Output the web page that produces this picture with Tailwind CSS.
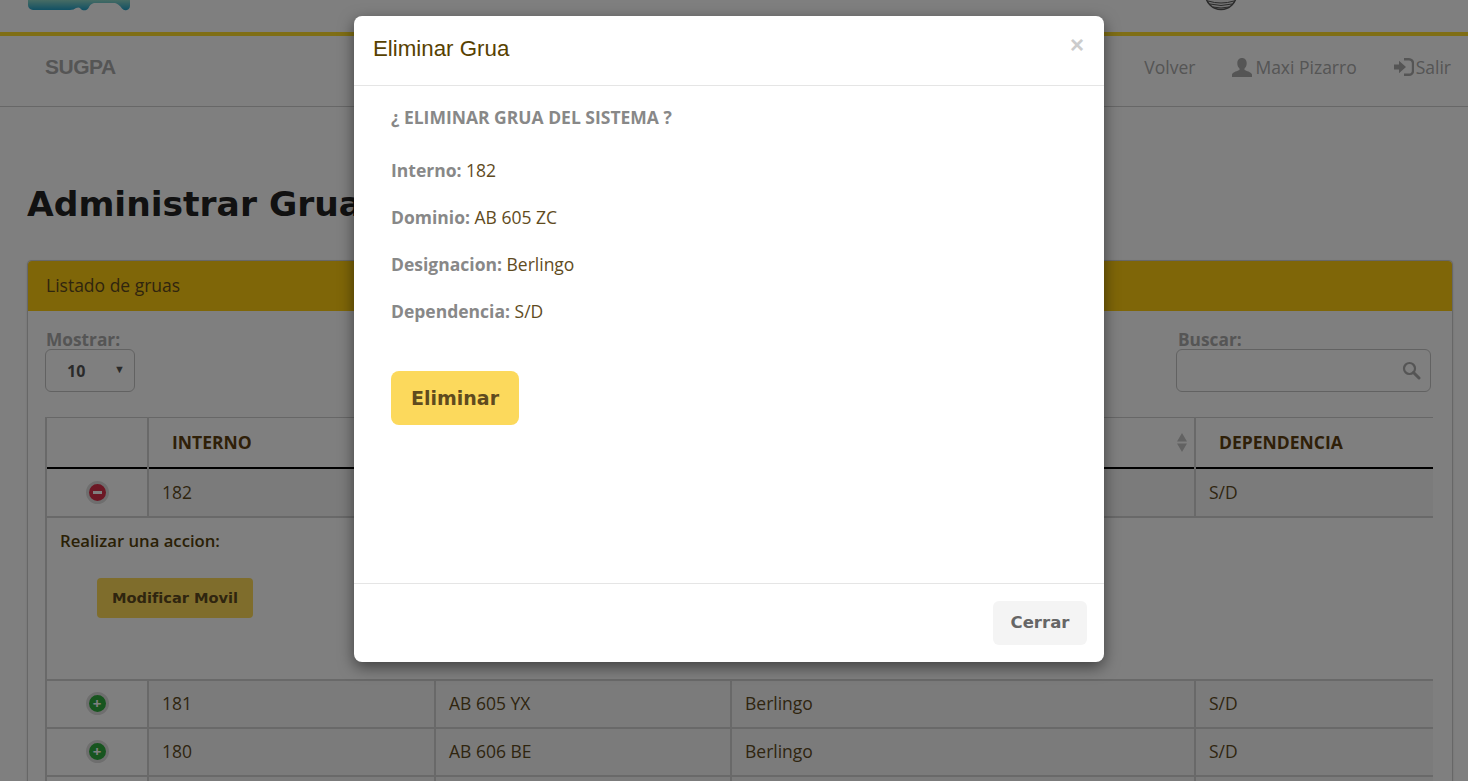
<!DOCTYPE html>
<html lang="es">
  <head>
    <meta charset="UTF-8" />
    <meta name="viewport" content="width=device-width, initial-scale=1.0" />
    <title>Administrar Gruas — SUGPA</title>
    <script src="https://cdn.jsdelivr.net/npm/@tailwindcss/browser@4"></script>
  </head>
  <body class="relative h-[781px] overflow-hidden bg-white font-['Open_Sans',sans-serif] text-[#5f4b1e]">
    <!-- cabecera recortada por el scroll -->
    <div class="flex h-8 items-start justify-between overflow-hidden pl-7 pr-[230px]">
      <svg width="102" height="11" viewBox="0 0 102 11">
        <defs><linearGradient id="logo" x1="0" y1="0" x2="0" y2="1"><stop offset="0" stop-color="#8fd8c8" /><stop offset="1" stop-color="#1f9fc8" /></linearGradient></defs>
        <path d="M0 0H102V6a4.500 4.500 0 0 1-8 2.500Q91 4 87 3H66q-4 1-5.500 5a5 5 0 0 1-8.500 0q-1.500-1-4 0-2 2-6 2H5a5 5 0 0 1-5-5z" fill="url(#logo)" />
      </svg>
      <svg width="34" height="11" viewBox="0 0 34 11">
        <circle cx="17" cy="-6" r="15.500" fill="#e8e8e8" stroke="#555" stroke-width="1.500" />
        <path d="M4 1q13 4 26 0M6 4q11 3 22 0M9 7q8 2 16 0" fill="none" stroke="#555" />
      </svg>
    </div>
    <nav class="flex h-[75px] items-center justify-between border-t-4 border-b border-t-[#ffdd2a] border-b-[#cfcfcf] bg-white pb-[8px] pl-[45px] pr-[17px] text-[#aaaaaa]">
      <span class="font-['Liberation_Sans',sans-serif] text-[21px] font-bold tracking-[-0.5px]">SUGPA</span>
      <div class="flex items-center gap-[37px] text-[17.500px]">
        <span>Volver</span>
        <span class="flex items-center gap-[3px]">
          <svg width="20" height="19" viewBox="0 0 20 19" fill="#aaaaaa"><path d="M10 0c3 0 4.700 2.200 4.700 5.200 0 2.300-1 4.300-2.200 5.300v1.500c1.800 1 6.500 1.800 7.500 4.500v2.500H0V16.500C1 13.800 5.700 13 7.500 12v-1.500C6.300 9.500 5.300 7.500 5.300 5.200 5.300 2.200 7 0 10 0z" /></svg>
          Maxi Pizarro
        </span>
        <span class="flex items-center gap-[2px]">
          <svg width="20" height="18" viewBox="0 0 20 18" fill="#aaaaaa"><path d="M0 6.500h5V2.800L12 9l-7 6.200v-3.700H0z" /><path d="M10 1.200h5a4 4 0 0 1 4 4v7.600a4 4 0 0 1-4 4h-5" fill="none" stroke="#aaaaaa" stroke-width="2.400" /></svg>
          Salir
        </span>
      </div>
    </nav>

    <main class="px-[27px] pt-[75px]">
      <h1 class="font-['DejaVu_Sans',sans-serif] text-[34.500px] leading-[44px] font-bold whitespace-nowrap text-[#222222]">Administrar Gruas</h1>
      <section class="mt-[34px] w-[1426px] rounded border border-[#cfcfcf] shadow-sm">
        <div class="flex h-[50px] items-center rounded-t bg-[#ffcc11] px-[18px] pb-px text-[17.500px] text-[#5f4b1e]">Listado de gruas</div>
        <div class="px-[17px] pt-[17px]">
          <div class="flex items-start justify-between pr-[4px]">
            <div>
              <div class="-mb-px pt-[2px] pl-px text-[17.300px] leading-[20px] font-bold text-[#aaaaaa]">Mostrar:</div>
              <div class="flex h-[43px] w-[90px] items-center justify-between rounded-md border border-[#c4c4c4] pl-[21px] pr-[9px] text-base font-bold text-[#555555]">
                10 <span class="mb-[3px] text-[11px] text-[#555555]">▼</span>
              </div>
            </div>
            <div>
              <div class="-mb-px pt-[2px] pl-0.5 text-[17.300px] leading-[20px] font-bold text-[#aaaaaa]">Buscar:</div>
              <div class="flex h-[43px] w-[255px] items-center justify-end rounded-md border border-[#c4c4c4] pr-[9px]">
                <svg width="19" height="19" viewBox="0 0 19 19" fill="none" stroke="#aaaaaa"><circle cx="7.500" cy="7.500" r="5.500" stroke-width="2.200" /><path d="M11.500 11.500l5.500 5.500" stroke-width="3" stroke-linecap="round" /></svg>
              </div>
            </div>
          </div>
          <table class="mt-[25px] w-[1387px] table-fixed border-collapse text-[17.500px]">
            <colgroup>
              <col class="w-[102px]" /><col class="w-[287px]" /><col class="w-[296px]" /><col class="w-[464px]" /><col class="w-[238px]" />
            </colgroup>
            <thead>
              <tr class="h-[50px] border-t border-b-2 border-t-[#cfcfcf] border-b-black font-bold text-[#5f4010]">
                <th class="border-x-2 border-[#d2d2d2]"></th>
                <th class="border-r-2 border-[#d2d2d2] pl-[23px] text-left">INTERNO</th>
                <th class="border-r-2 border-[#d2d2d2] pl-[23px] text-left">DOMINIO</th>
                <th class="relative border-r-2 border-[#d2d2d2] pl-[23px] text-left">DESIGNACION
                  <svg class="absolute right-[7px] top-[15px]" width="10" height="19" viewBox="0 0 10 19" fill="#c4c4c4"><path d="M5 0l5 8.500H0zM5 19l5-8.500H0z" /></svg>
                </th>
                <th class="pl-[23px] text-left">DEPENDENCIA</th>
              </tr>
            </thead>
            <tbody>
              <tr class="h-[49px] border-b-2 border-[#d2d2d2] bg-[#f7f7f7]">
                <td class="border-x-2 border-[#d2d2d2] bg-white">
                  <span class="mx-auto flex size-[23px] items-center justify-center rounded-full border-[3px] border-[#dddddd] bg-[#d9304a]"><span class="h-[3px] w-[9px] bg-white"></span></span>
                </td>
                <td class="border-r-2 border-[#d2d2d2] pl-[13px]">182</td>
                <td class="border-r-2 border-[#d2d2d2] pl-[13px]">AB 605 ZC</td>
                <td class="border-r-2 border-[#d2d2d2] pl-[13px]">Berlingo</td>
                <td class="pl-[13px]">S/D</td>
              </tr>
              <tr class="h-[163px] border-b-2 border-[#d2d2d2]">
                <td colspan="5" class="border-l-2 border-[#d2d2d2] pb-[61px] pl-[13px] align-top">
                  <p class="pt-[10px] text-[16.700px] font-semibold text-[#55410a]">Realizar una accion:</p>
                  <span class="mt-[25px] ml-[37px] flex h-10 w-[156px] items-center justify-center rounded bg-[#ffdb58] font-['DejaVu_Sans',sans-serif] text-[14.600px] font-bold text-[#5f4b1e]">Modificar Movil</span>
                </td>
              </tr>
              <tr class="h-[48px] border-b-2 border-[#d2d2d2] bg-[#f7f7f7]">
                <td class="border-x-2 border-[#d2d2d2] bg-white">
                  <span class="mx-auto flex size-[23px] items-center justify-center rounded-full border-[3px] border-[#dddddd] bg-[#2faa3e] text-[15px] leading-none font-bold text-white">+</span>
                </td>
                <td class="border-r-2 border-[#d2d2d2] pl-[13px]">181</td>
                <td class="border-r-2 border-[#d2d2d2] pl-[13px]">AB 605 YX</td>
                <td class="border-r-2 border-[#d2d2d2] pl-[13px]">Berlingo</td>
                <td class="pl-[13px]">S/D</td>
              </tr>
              <tr class="h-[48px] border-b-2 border-[#d2d2d2] bg-[#f7f7f7]">
                <td class="border-x-2 border-[#d2d2d2] bg-white">
                  <span class="mx-auto flex size-[23px] items-center justify-center rounded-full border-[3px] border-[#dddddd] bg-[#2faa3e] text-[15px] leading-none font-bold text-white">+</span>
                </td>
                <td class="border-r-2 border-[#d2d2d2] pl-[13px]">180</td>
                <td class="border-r-2 border-[#d2d2d2] pl-[13px]">AB 606 BE</td>
                <td class="border-r-2 border-[#d2d2d2] pl-[13px]">Berlingo</td>
                <td class="pl-[13px]">S/D</td>
              </tr>
              <tr class="h-[48px] bg-[#f7f7f7]">
                <td class="border-x-2 border-[#d2d2d2] bg-white"></td>
                <td class="border-r-2 border-[#d2d2d2]"></td>
                <td class="border-r-2 border-[#d2d2d2]"></td>
                <td class="border-r-2 border-[#d2d2d2]"></td>
                <td></td>
              </tr>
            </tbody>
          </table>
        </div>
      </section>
    </main>

    <!-- modal -->
    <div class="absolute inset-0 flex justify-center bg-black/50 pt-4 pr-[10px]">
      <div class="flex h-[646px] w-[750px] flex-col rounded-lg bg-white shadow-[0_5px_15px_rgba(0,0,0,0.5)]">
        <div class="relative flex h-[70px] items-center border-b border-[#e5e5e5] pb-1 px-[19px]">
          <h4 class="font-['Liberation_Sans',sans-serif] text-[22.300px] text-[#574100]">Eliminar Grua</h4>
          <span class="absolute right-[20px] top-[16px] font-['Liberation_Sans',sans-serif] text-[24px] leading-[26px] font-bold text-[#cccccc]">×</span>
        </div>
        <div class="flex-1 px-[37px] pt-[19px] text-[17.500px] text-[#5f4b1e]">
          <p class="leading-[24px] font-bold text-[#888888]">¿ ELIMINAR GRUA DEL SISTEMA ?</p>
          <p class="mt-[29px] leading-[24px]"><b class="text-[#888888]">Interno:</b> 182</p>
          <p class="mt-[23px] leading-[24px]"><b class="text-[#888888]">Dominio:</b> AB 605 ZC</p>
          <p class="mt-[23px] leading-[24px]"><b class="text-[#888888]">Designacion:</b> Berlingo</p>
          <p class="mt-[23px] leading-[24px]"><b class="text-[#888888]">Dependencia:</b> S/D</p>
          <button class="mt-[48px] flex h-[54px] w-[128px] items-center justify-center rounded-lg bg-[#fcd95c] font-['DejaVu_Sans',sans-serif] text-[19px] font-bold text-[#5f4b1e]">Eliminar</button>
        </div>
        <div class="flex h-[79px] items-start justify-end border-t border-[#e5e5e5] pt-[17px] pr-[17px]">
          <button class="flex h-11 w-[94px] items-center justify-center rounded-md bg-[#f4f4f4] font-['DejaVu_Sans',sans-serif] text-[16.500px] font-bold text-[#666666]">Cerrar</button>
        </div>
      </div>
    </div>
  </body>
</html>
